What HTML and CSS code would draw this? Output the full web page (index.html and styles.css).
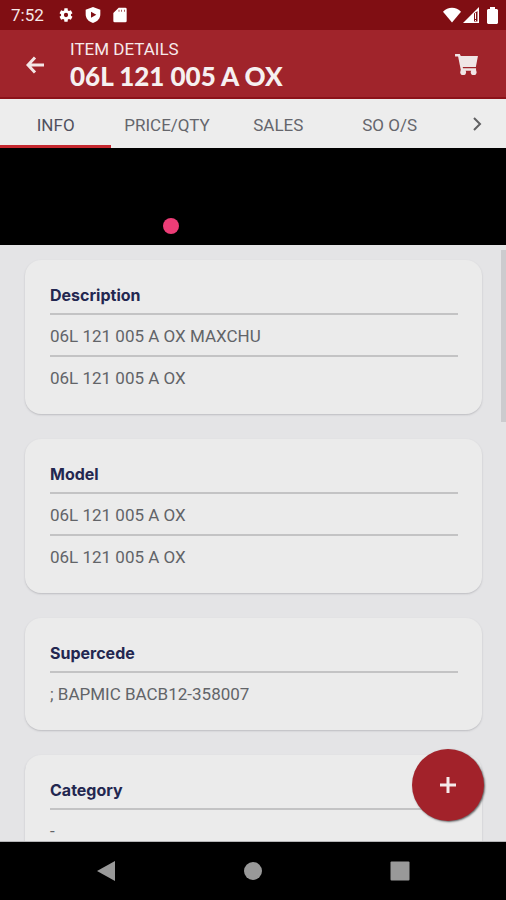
FILE: index.html
```html
<!DOCTYPE html>
<html lang="en">
<head>
<meta charset="utf-8">
<meta name="viewport" content="width=device-width, initial-scale=1">
<title>Item Details</title>
<link rel="stylesheet" href="styles.css">
</head>
<body>
<div class="status">
  <span class="clock">7:52</span>
  <svg class="status-icon" viewBox="0 0 24 24" aria-hidden="true"><path d="M19.4 13a7.500 7.500 0 0 0 0-2l2.300-1.800-2.400-4.200-2.800 1.100-1.700-1L14.400 2H9.600l-.4 3.100-1.700 1L4.700 5 2.300 9.200 4.600 11a7.500 7.500 0 0 0 0 2l-2.300 1.800L4.700 19l2.800-1.100 1.700 1 .4 3.100h4.800l.4-3.100 1.700-1 2.800 1.100 2.400-4.200zM12 15.200a3.200 3.200 0 1 1 0-6.400 3.200 3.200 0 0 1 0 6.400z"/></svg>
  <svg class="status-icon" viewBox="0 0 24 24" aria-hidden="true"><path fill-rule="evenodd" d="M12 0 1 4V11c0 6 4 11 11 13C19 22 23 17 23 11V4zM9 7l8 4.500L9 16z"/></svg>
  <svg class="status-icon" viewBox="0 0 24 24" aria-hidden="true"><path fill-rule="evenodd" d="M10 1h10q2 0 2 2v18q0 2-2 2H4q-2 0-2-2V9zM10 4v3h1V4zm4 0v3h1V4zm4 0v3h1V4z"/></svg>
  <div class="signals">
    <svg class="wifi" viewBox="0 0 19 16" aria-hidden="true"><path d="M9.500 16 0 4.500C5-1 14-1 19 4.500z"/></svg>
    <svg class="cell" viewBox="0 0 16 16" aria-hidden="true"><path fill-rule="evenodd" d="M16 0v16H0zM11 6.500V14.500h3.500V4z"/><path d="M12 6h1v6h-1zM12 13h1v1h-1z"/></svg>
    <svg class="battery" viewBox="0 0 11 17" aria-hidden="true"><path d="M3 2V0h5v2h2l1 1v13l-1 1H1l-1-1V3l1-1z"/></svg>
  </div>
</div>
<header class="appbar">
  <button class="icon-button" type="button" aria-label="Back">
    <svg class="back" viewBox="0 0 18 18" aria-hidden="true"><path d="M9 1.500 2 9l7 7.500M2 9h16"/></svg>
  </button>
  <div class="heading">
    <p class="kicker">ITEM DETAILS</p>
    <h1 class="item">06L 121 005 A OX</h1>
  </div>
  <button class="icon-button" type="button" aria-label="Cart">
    <svg class="cart" viewBox="0 0 24 22" aria-hidden="true"><path d="M0 0h5l1 2h18l-2.200 11.500H8l.4 1.500H22v2.500H6.200L3.200 2.500H0z"/><circle cx="8.500" cy="19" r="3"/><circle cx="19.500" cy="19" r="3"/></svg>
  </button>
</header>
<nav class="tabs">
  <a class="tab active" href="#info">INFO</a>
  <a class="tab" href="#price">PRICE/QTY</a>
  <a class="tab" href="#sales">SALES</a>
  <a class="tab" href="#so">SO O/S</a>
  <button class="more" type="button" aria-label="More tabs"><svg viewBox="0 0 10 16" aria-hidden="true"><path d="m1 2 6 6-6 6"/></svg></button>
</nav>
<div class="banner"><span class="dot"></span></div>
<main class="content" id="info">
  <section class="card">
    <h2 class="title">Description</h2>
    <p class="row">06L 121 005 A OX MAXCHU</p>
    <p class="row">06L 121 005 A OX</p>
  </section>
  <section class="card">
    <h2 class="title">Model</h2>
    <p class="row">06L 121 005 A OX</p>
    <p class="row">06L 121 005 A OX</p>
  </section>
  <section class="card">
    <h2 class="title">Supercede</h2>
    <p class="row">; BAPMIC BACB12-358007</p>
  </section>
  <section class="card">
    <h2 class="title">Category</h2>
    <p class="row">-</p>
  </section>
  <span class="thumb"></span>
  <button class="fab" type="button" aria-label="Add"><svg viewBox="0 0 16 16" aria-hidden="true"><path d="M8 0v16M0 8h16"/></svg></button>
</main>
<footer class="sysnav">
  <button class="key" type="button" aria-label="System back"><svg viewBox="0 0 20 20" aria-hidden="true"><path d="M1 10 19 0v20z"/></svg></button>
  <button class="key" type="button" aria-label="Home"><svg viewBox="0 0 20 20" aria-hidden="true"><circle cx="10" cy="10" r="9"/></svg></button>
  <button class="key" type="button" aria-label="Recent apps"><svg viewBox="0 0 20 20" aria-hidden="true"><rect width="19" height="19" x=".5" y=".5" rx="1"/></svg></button>
</footer>
</body>
</html>
```

FILE: styles.css
```css
* { box-sizing: border-box; }
body {
  margin: 0;
  height: 100vh;
  display: flex;
  flex-direction: column;
  background: #e4e4e6;
  font-family: Roboto, "Liberation Sans", sans-serif;
  font-size: 17px;
}
h1, h2, p { margin: 0; }
button { border: 0; padding: 0; background: none; display: flex; align-items: center; justify-content: center; }
svg { display: block; }

.status {
  flex: none;
  height: 30px;
  padding: 0 8px 0 11px;
  display: flex;
  align-items: center;
  gap: 11px;
  background: #800e13;
  color: #f6e8e8;
  fill: #fff;
}
.clock { margin-right: 3px; }
.status-icon { width: 16px; height: 16px; }
.signals { margin-left: auto; display: flex; align-items: center; gap: 2px; }
.wifi { width: 18px; height: 16px; }
.cell { width: 16px; height: 16px; }
.battery { width: 11px; height: 17px; margin-left: 6px; }

.appbar {
  flex: none;
  height: 69px;
  padding: 2px 5px 0 0;
  display: flex;
  align-items: center;
  background: #a0242b;
  border-bottom: 2px solid #8c1219;
  color: #f6eaea;
}
.icon-button { width: 70px; height: 64px; flex: none; }
.back { width: 18px; height: 18px; fill: none; stroke: #f4e6e6; stroke-width: 3; }
.cart { width: 23px; height: 21px; fill: #f0e6e6; }
.heading { flex: 1; }
.kicker { line-height: 22px; }
.item { font: 900 26px/32px Lato, sans-serif; color: #f6f0f0; white-space: nowrap; }

.tabs {
  flex: none;
  height: 49px;
  display: grid;
  grid-template-columns: repeat(4, 22%) 1fr;
  background: #ededed;
}
.tab {
  display: flex;
  align-items: center;
  justify-content: center;
  padding-top: 6px;
  border-bottom: 3px solid transparent;
  color: #65666c;
  text-decoration: none;
}
.tab.active { border-color: #c5282f; color: #50505e; }
.more { padding-left: 4px; }
.more svg { width: 10px; height: 16px; fill: none; stroke: #606062; stroke-width: 2; }

.banner { flex: none; height: 97px; background: #000; position: relative; }
.dot { position: absolute; left: 163px; top: 70px; width: 16px; height: 16px; border-radius: 50%; background: #ed3d77; }

.content {
  flex: 1;
  min-height: 0;
  overflow: hidden;
  position: relative;
  padding: 15px 24px 0 25px;
  display: flex;
  flex-direction: column;
  gap: 25px;
  border-bottom: 1px solid #b5b5b7;
}
.card {
  flex: none;
  padding: 23px 24px 17px 25px;
  border-radius: 16px;
  background: #ebebeb;
  box-shadow: 0 1px 2px #bcbcc0;
}
.title { font: 700 16px/24px Inter, sans-serif; color: #232750; padding-bottom: 6px; }
.row { height: 42px; border-top: 2px solid #c3c3c4; line-height: 42px; color: #626468; }
.thumb { position: absolute; right: 0; top: 5px; width: 5px; height: 172px; background: #cbcbce; }
.fab {
  position: absolute;
  right: 22px;
  bottom: 20px;
  width: 72px;
  height: 72px;
  border-radius: 50%;
  background: #a2222a;
  box-shadow: 1px 1px 2px #626264;
}
.fab svg { width: 16px; height: 16px; stroke: #f5eaea; stroke-width: 3; }

.sysnav {
  flex: none;
  height: 58px;
  padding: 0 33px;
  display: grid;
  grid-template-columns: repeat(3, 1fr);
  background: #000;
}
.key svg { width: 20px; height: 20px; fill: #999; }
```
